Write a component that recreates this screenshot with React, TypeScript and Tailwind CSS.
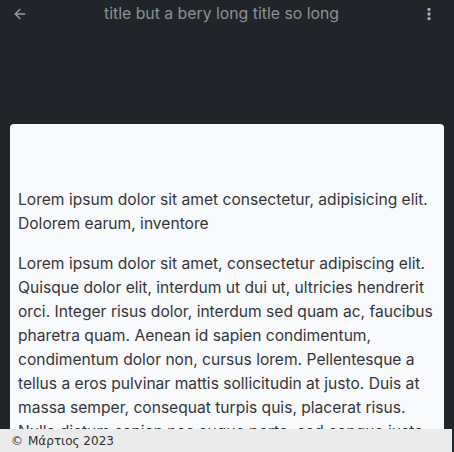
import { ArrowLeft, EllipsisVertical } from 'lucide-react'

export default function App() {
  return (
    <div className="min-h-screen bg-[#212529] font-['Inter',sans-serif]">
      {/* Top bar */}
      <header className="flex items-center h-[28px] pl-[12px] pr-[17px]">
        <ArrowLeft className="w-[16px] h-[16px] text-[#9aa0a6]" strokeWidth={2} />
        <h1 className="flex-1 text-center text-[15.8px] text-[#8c9196] truncate pr-[6px]">
          title but a bery long title so long
        </h1>
        <EllipsisVertical className="w-[16px] h-[16px] text-[#b4b8bc]" strokeWidth={3} />
      </header>

      <main className="pt-[96px] px-[10px] pb-[40px]">
        <div className="bg-[#f8f9fa] rounded-[4px] px-[8px] pt-[64px] pb-4 text-[15.6px] leading-[24px] text-[#33373b]">
          <p className="mb-4">Lorem ipsum dolor sit amet consectetur, adipisicing elit. Dolorem earum, inventore</p>
          <p className="mb-4">
            Lorem ipsum dolor sit amet, consectetur adipiscing elit. Quisque dolor elit, interdum ut dui ut, ultricies
            hendrerit orci. Integer risus dolor, interdum sed quam ac, faucibus pharetra quam. Aenean id sapien
            condimentum, condimentum dolor non, cursus lorem. Pellentesque a tellus a eros pulvinar mattis sollicitudin
            at justo. Duis at massa semper, consequat turpis quis, placerat risus. Nulla dictum sapien nec augue porta,
            sed congue justo dapibus. Proin in mi eu velit dignissim faucibus. Donec vitae nibh vel lorem tincidunt
            aliquet.
          </p>
        </div>
      </main>

      {/* Footer */}
      <footer className="fixed bottom-0 left-0 right-[2px] h-[23px] bg-[#ebebeb] flex items-center pl-[11px] gap-[5px] text-[12px] text-[#2f2f2f] font-['DejaVu_Sans',sans-serif]">
        <span>©</span>
        <span>Μάρτιος 2023</span>
      </footer>
    </div>
  )
}
